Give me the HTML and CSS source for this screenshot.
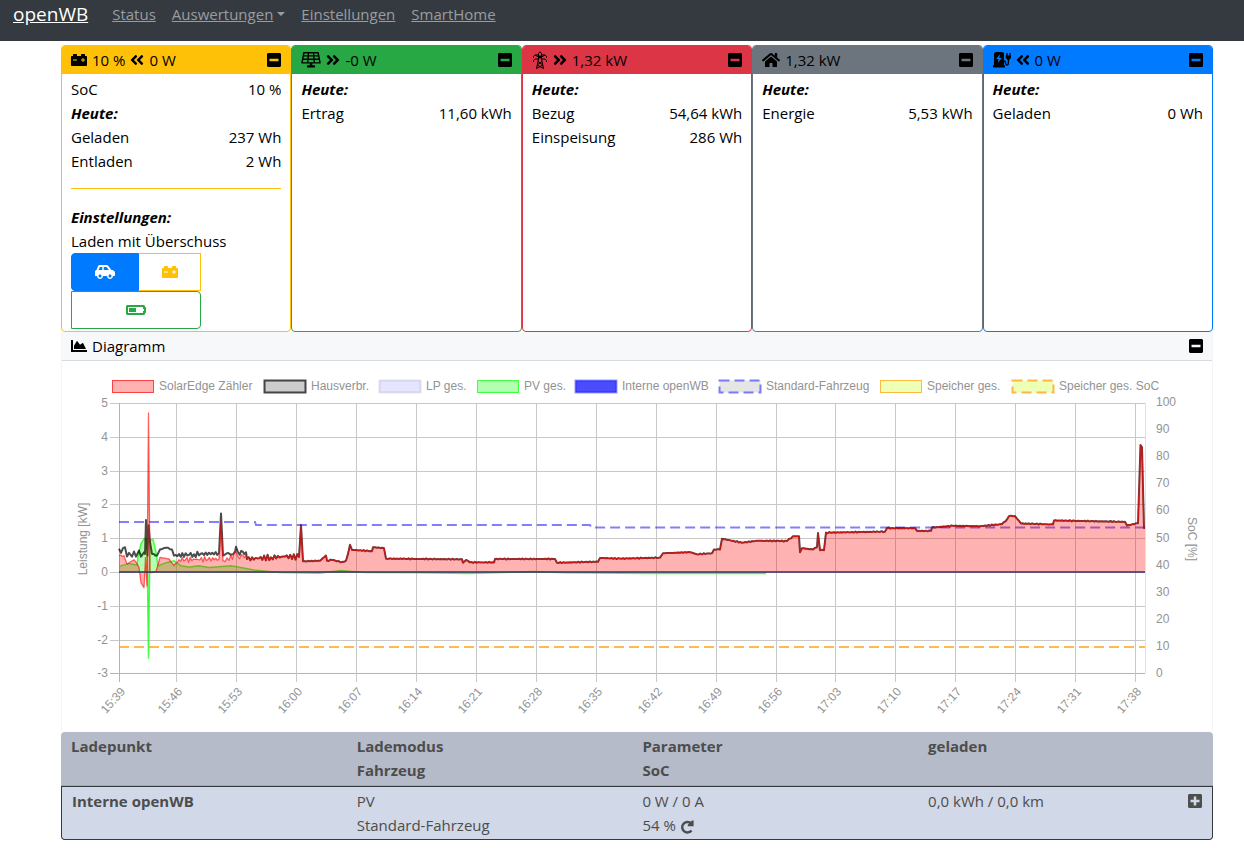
FILE: index.html
```html
<!DOCTYPE html>
<html lang="de">
<head>
<meta charset="utf-8">
<title>openWB</title>
<link rel="stylesheet" href="styles.css">
</head>
<body>
<svg class="sprite" aria-hidden="true">
  <symbol id="minus" viewBox="0 32 448 448"><path fill-rule="evenodd" d="M400 32H48C21.500 32 0 53.500 0 80v352c0 26.500 21.500 48 48 48h352c26.500 0 48-21.500 48-48V80c0-26.500-21.500-48-48-48zM92 296c-6.600 0-12-5.400-12-12v-56c0-6.600 5.400-12 12-12h264c6.600 0 12 5.400 12 12v56c0 6.600-5.400 12-12 12H92z"/></symbol>
  <symbol id="plus" viewBox="0 32 448 448"><path fill-rule="evenodd" d="M400 32H48C21.500 32 0 53.500 0 80v352c0 26.500 21.500 48 48 48h352c26.500 0 48-21.500 48-48V80c0-26.500-21.500-48-48-48zm-32 252c0 6.600-5.400 12-12 12h-92v92c0 6.600-5.400 12-12 12h-56c-6.600 0-12-5.400-12-12v-92H92c-6.600 0-12-5.400-12-12v-56c0-6.600 5.400-12 12-12h92v-92c0-6.600 5.400-12 12-12h56c6.600 0 12 5.400 12 12v92h92c6.600 0 12 5.400 12 12v56z"/></symbol>
  <symbol id="right" viewBox="0 0 448 512"><path d="M224.300 273l-136 136c-9.400 9.400-24.600 9.400-33.900 0l-22.600-22.600c-9.400-9.400-9.400-24.600 0-33.900l96.400-96.400-96.400-96.400c-9.400-9.400-9.400-24.600 0-33.900L54.300 103c9.400-9.400 24.600-9.400 33.900 0l136 136c9.500 9.400 9.500 24.600.1 34zm192-34l-136-136c-9.400-9.400-24.600-9.400-33.900 0l-22.600 22.600c-9.400 9.400-9.400 24.600 0 33.900l96.400 96.400-96.400 96.400c-9.400 9.400-9.400 24.600 0 33.900l22.600 22.600c9.400 9.400 24.600 9.400 33.900 0l136-136c9.400-9.200 9.400-24.400 0-33.800z"/></symbol>
  <symbol id="left" viewBox="0 0 448 512"><path transform="translate(448 0) scale(-1 1)" d="M224.300 273l-136 136c-9.400 9.400-24.600 9.400-33.900 0l-22.600-22.600c-9.400-9.400-9.400-24.600 0-33.900l96.400-96.400-96.400-96.400c-9.400-9.400-9.400-24.600 0-33.900L54.300 103c9.400-9.400 24.600-9.400 33.900 0l136 136c9.500 9.400 9.500 24.600.1 34zm192-34l-136-136c-9.400-9.400-24.600-9.400-33.900 0l-22.600 22.600c-9.400 9.400-9.400 24.600 0 33.900l96.400 96.400-96.400 96.400c-9.400 9.400-9.400 24.600 0 33.900l22.600 22.600c9.400 9.400 24.600 9.400 33.900 0l136-136c9.400-9.200 9.400-24.400 0-33.800z"/></symbol>
  <symbol id="home" viewBox="0 0 576 512"><path d="M280.370 148.260L96 300.110V464a16 16 0 0 0 16 16l112.060-.29a16 16 0 0 0 15.920-16V368a16 16 0 0 1 16-16h64a16 16 0 0 1 16 16v95.640a16 16 0 0 0 16 16.050L464 480a16 16 0 0 0 16-16V300L295.670 148.260a12.190 12.190 0 0 0-15.300 0zM571.600 251.470L488 182.560V44.050a12 12 0 0 0-12-12h-56a12 12 0 0 0-12 12v72.610L318.470 43a48 48 0 0 0-61 0L4.340 251.470a12 12 0 0 0-1.600 16.900l25.500 31A12 12 0 0 0 45.150 301l235.220-193.740a12.190 12.190 0 0 1 15.300 0L530.900 301a12 12 0 0 0 16.900-1.600l25.500-31a12 12 0 0 0-1.700-16.930z"/></symbol>
  <symbol id="battery" viewBox="0 0 512 512"><path fill-rule="evenodd" d="M480 128h-32V80c0-8.840-7.160-16-16-16h-96c-8.840 0-16 7.160-16 16v48H192V80c0-8.840-7.160-16-16-16H80c-8.840 0-16 7.160-16 16v48H32c-17.670 0-32 14.330-32 32v256c0 17.670 14.330 32 32 32h448c17.670 0 32-14.330 32-32V160c0-17.670-14.330-32-32-32zM192 264c0 4.420-3.580 8-8 8H72c-4.420 0-8-3.580-8-8v-16c0-4.420 3.580-8 8-8h112c4.420 0 8 3.580 8 8v16zm256 0c0 4.420-3.580 8-8 8h-40v40c0 4.420-3.580 8-8 8h-16c-4.420 0-8-3.580-8-8v-40h-40c-4.420 0-8-3.580-8-8v-16c0-4.420 3.580-8 8-8h40v-40c0-4.420 3.580-8 8-8h16c4.420 0 8 3.580 8 8v40h40c4.420 0 8 3.580 8 8v16z"/></symbol>
  <symbol id="solar" viewBox="0 0 640 512"><path fill="none" stroke="currentColor" stroke-width="44" stroke-linejoin="round" d="M92 24H548L610 346H30ZM74 122H566M52 230H588M240 24L212 346M400 24L428 346"/><path d="M280 350h80v70h70a16 16 0 0 1 16 16v60H194v-60a16 16 0 0 1 16-16h70z"/></symbol>
  <symbol id="pylon" viewBox="0 0 16 18"><path fill="none" stroke="currentColor" stroke-width="1" d="M4.500 17.500L6.500 8V2.500L8 .8L9.500 2.500V8L11.500 17.500M6.500 4H3L1.500 5.500V7M9.500 4H13L14.500 5.500V7M6.500 8H3L1.500 9.500V11M9.500 8H13L14.500 9.500V11M3 4L6.500 6H9.500L13 4M6.500 8L9.500 4M9.500 8L6.500 4M6 10.500L10.800 14M10 10.500L5.200 14M5.200 14L11.500 17.500M10.800 14L4.500 17.500"/></symbol>
  <symbol id="charger" viewBox="0 0 18 16"><path fill-rule="evenodd" d="M3 0H9Q11 0 11 2V13H12V15.500H0V13H1V2Q1 0 3 0ZM6.800 2L3.300 7H5.600L4.800 11L8.700 6H6.300Z"/><path fill="none" stroke="currentColor" stroke-width="1.400" d="M11 9Q12.500 9 12.500 11Q12.700 13 14 13Q15.400 13 15.400 11V7M14 1V4M17 1V4"/><path d="M12.800 3.500H18V5.500Q17.500 7.800 15.400 8Q13.200 7.800 12.800 5.500Z"/></symbol>
  <symbol id="car" viewBox="0 0 640 512"><path fill-rule="evenodd" d="M544 192h-16L419.220 56.020A64.025 64.025 0 0 0 369.240 32H155.330c-26.170 0-49.700 15.930-59.420 40.230L48 194.260C20.440 201.400 0 226.210 0 256v112c0 8.840 7.160 16 16 16h48c0 53.020 42.980 96 96 96s96-42.980 96-96h128c0 53.020 42.980 96 96 96s96-42.980 96-96h48c8.840 0 16-7.160 16-16v-80c0-53.020-42.980-96-96-96zM160 432c-26.470 0-48-21.530-48-48s21.530-48 48-48 48 21.530 48 48-21.530 48-48 48zm72-240H116.930l38.400-96H232v96zm48 0V96h89.240l76.800 96H280zm200 240c-26.470 0-48-21.530-48-48s21.530-48 48-48 48 21.530 48 48-21.530 48-48 48z"/></symbol>
  <symbol id="half" viewBox="0 0 640 512"><path fill-rule="evenodd" d="M544 160v64h32v64h-32v64H64V160h480m16-64H48c-26.510 0-48 21.490-48 48v224c0 26.510 21.490 48 48 48h512c26.510 0 48-21.490 48-48v-16h8c13.255 0 24-10.745 24-24V184c0-13.255-10.745-24-24-24h-8v-16c0-26.510-21.490-48-48-48zm-240 96H96v128h224V192z"/></symbol>
  <symbol id="area" viewBox="0 0 512 512"><path d="M500 384c6.600 0 12 5.400 12 12v40c0 6.600-5.400 12-12 12H12c-6.600 0-12-5.400-12-12V76c0-6.600 5.400-12 12-12h40c6.600 0 12 5.400 12 12v308h436zM372.700 159.500L288 216l-85.300-113.700c-5.100-6.800-15.500-6.300-19.900 1L96 248v104h384l-89.900-187.800c-3.200-6.500-11.400-8.700-17.400-4.700z"/></symbol>
  <symbol id="redo" viewBox="0 0 14 14"><path fill="none" stroke="currentColor" stroke-width="2.400" d="M11.500 10.400A5.200 5.200 0 1 1 11.300 3.800"/><path d="M13.600 .4V6.200H7.800V4.700L12 .4Z"/></symbol>
</svg>

<nav class="navbar">
  <a class="brand" href="#">openWB</a>
  <a class="nav-link" href="#">Status</a>
  <a class="nav-link dropdown" href="#">Auswertungen</a>
  <a class="nav-link" href="#">Einstellungen</a>
  <a class="nav-link" href="#">SmartHome</a>
</nav>

<main class="page">
  <section class="cards">
    <article class="card yellow">
      <header class="card-head"><svg class="icon"><use href="#battery"/></svg><span>10 %</span><svg class="icon narrow"><use href="#left"/></svg><span>0 W</span><button class="toggle" aria-label="Speicher einklappen"><svg class="box"><use href="#minus"/></svg></button></header>
      <div class="card-body">
        <div class="line"><span>SoC</span><span>10 %</span></div>
        <div class="title">Heute:</div>
        <div class="line"><span>Geladen</span><span>237 Wh</span></div>
        <div class="line"><span>Entladen</span><span>2 Wh</span></div>
        <hr class="rule">
        <div class="title">Einstellungen:</div>
        <div class="line">Laden mit Überschuss</div>
        <div class="modes">
          <button class="mode car" aria-label="Auto"><svg class="icon wide"><use href="#car"/></svg></button>
          <button class="mode store" aria-label="Speicher"><svg class="icon"><use href="#battery"/></svg></button>
          <button class="mode both" aria-label="Mindest-SoC"><svg class="icon wide"><use href="#half"/></svg></button>
        </div>
      </div>
    </article>
    <article class="card green">
      <header class="card-head"><svg class="icon wide"><use href="#solar"/></svg><svg class="icon narrow"><use href="#right"/></svg><span>-0 W</span><button class="toggle" aria-label="PV einklappen"><svg class="box"><use href="#minus"/></svg></button></header>
      <div class="card-body">
        <div class="title">Heute:</div>
        <div class="line"><span>Ertrag</span><span>11,60 kWh</span></div>
      </div>
    </article>
    <article class="card red">
      <header class="card-head"><svg class="icon tall"><use href="#pylon"/></svg><svg class="icon narrow"><use href="#right"/></svg><span>1,32 kW</span><button class="toggle" aria-label="Netz einklappen"><svg class="box"><use href="#minus"/></svg></button></header>
      <div class="card-body">
        <div class="title">Heute:</div>
        <div class="line"><span>Bezug</span><span>54,64 kWh</span></div>
        <div class="line"><span>Einspeisung</span><span>286 Wh</span></div>
      </div>
    </article>
    <article class="card gray">
      <header class="card-head"><svg class="icon house"><use href="#home"/></svg><span>1,32 kW</span><button class="toggle" aria-label="Haus einklappen"><svg class="box"><use href="#minus"/></svg></button></header>
      <div class="card-body">
        <div class="title">Heute:</div>
        <div class="line"><span>Energie</span><span>5,53 kWh</span></div>
      </div>
    </article>
    <article class="card blue">
      <header class="card-head"><svg class="icon house"><use href="#charger"/></svg><svg class="icon narrow"><use href="#left"/></svg><span>0 W</span><button class="toggle" aria-label="Ladepunkte einklappen"><svg class="box"><use href="#minus"/></svg></button></header>
      <div class="card-body">
        <div class="title">Heute:</div>
        <div class="line"><span>Geladen</span><span>0 Wh</span></div>
      </div>
    </article>
  </section>

  <section class="diagram">
    <header class="diagram-head"><svg class="icon"><use href="#area"/></svg><span>Diagramm</span><button class="toggle" aria-label="Diagramm einklappen"><svg class="box"><use href="#minus"/></svg></button></header>
    <svg class="chart" id="chart" viewBox="0 0 1150 371" role="img" aria-label="Leistung und SoC"></svg>
  </section>

  <table class="points">
    <colgroup><col class="col"><col class="col"><col class="col"><col></colgroup>
    <thead>
      <tr><th>Ladepunkt</th><th>Lademodus<br>Fahrzeug</th><th>Parameter<br>SoC</th><th>geladen</th></tr>
    </thead>
    <tbody>
      <tr>
        <th scope="row">Interne openWB</th>
        <td>PV<br>Standard-Fahrzeug</td>
        <td>0 W / 0 A<br>54 % <button class="refresh" aria-label="SoC aktualisieren"><svg class="redo"><use href="#redo"/></svg></button></td>
        <td><div class="last"><span>0,0 kWh / 0,0 km</span><button class="toggle" aria-label="Ladepunkt ausklappen"><svg class="box"><use href="#plus"/></svg></button></div></td>
      </tr>
    </tbody>
  </table>
</main>
<script src="chart.js"></script>
</body>
</html>
```

FILE: styles.css
```css
* { box-sizing: border-box; }
body {
  margin: 0;
  background: #fff;
  color: #000;
  font-family: "Open Sans", "Noto Sans", sans-serif;
  font-size: 15px;
  line-height: 24px;
}
.sprite { display: none; }
button {
  margin: 0;
  padding: 0;
  border: 0;
  background: none;
  color: inherit;
  font: inherit;
  cursor: pointer;
}
svg { fill: currentColor; }

.navbar {
  display: flex;
  align-items: flex-start;
  gap: 16px;
  padding: 2px 13px 15px;
  background: #343a40;
}
.brand { margin-right: 8px; color: #fff; font-size: 19px; }
.nav-link { color: #9a9da0; }
.dropdown::after {
  content: "";
  display: inline-block;
  margin-left: 4px;
  vertical-align: 4px;
  border: 4px solid transparent;
  border-top-color: currentColor;
  border-bottom: 0;
}

.page { padding: 4px 31px 8px 61px; }
.cards { display: grid; grid-template-columns: repeat(5, 1fr); }
.card {
  min-width: 0;
  border: 1px solid var(--tone);
  border-radius: 4px;
  overflow: hidden;
}
.yellow { --tone: #ffc107; }
.green { --tone: #28a745; }
.red { --tone: #dc3545; }
.gray { --tone: #6c757d; }
.blue { --tone: #007bff; }
.card-head {
  display: flex;
  align-items: center;
  gap: 5px;
  padding: 2px 9px;
  background: var(--tone);
}
.icon { display: block; flex: none; width: 16px; height: 16px; }
.narrow { width: 14px; }
.wide { width: 20px; }
.house { width: 18px; }
.tall { height: 18px; }
.box { display: block; width: 14px; height: 14px; }
.toggle { margin-left: auto; }
.card-body { padding: 3px 9px 2px; }
.line { display: flex; justify-content: space-between; }
.title { font-weight: 700; font-style: italic; }
.rule { height: 1px; margin: 15px 0 16px; border: 0; background: var(--tone); }
.modes { display: grid; grid-template-columns: 68px 62px; }
.mode {
  display: flex;
  align-items: center;
  justify-content: center;
  height: 38px;
  border: 1px solid currentColor;
}
.car { border-color: #007bff; border-radius: 4px 0 0 4px; background: #007bff; color: #fff; }
.store { border-left: 0; color: #ffc107; }
.both { grid-column: 1 / -1; border-color: #28a745; border-radius: 0 4px 4px 0; color: #28a745; }

.diagram { border: 1px solid #f4f4f4; border-top: 0; border-bottom: 0; }
.diagram-head {
  display: flex;
  align-items: center;
  gap: 5px;
  padding: 2px 9px;
  border-bottom: 1px solid #d9dbdf;
  background: #f7f8fa;
}
.chart { display: block; width: 100%; height: auto; }
.chart text { fill: #939393; font: 12px "Liberation Sans", Arial, sans-serif; }
.grid { stroke: #c8c8c8; fill: none; }
.edge { stroke: #b4b4b4; fill: none; }
.pale { stroke: #e0e0e0; fill: none; }

.points {
  width: 100%;
  table-layout: fixed;
  border-spacing: 0;
  color: #4d4d4d;
}
.col { width: 24.8%; }
.points th, .points td { padding: 2px 10px; text-align: left; vertical-align: top; }
.points thead th { padding-bottom: 3px; background: #b5bbc9; border-bottom: 1px solid #9fa6b7; }
.points thead th:first-child { border-radius: 4px 0 0 0; }
.points thead th:last-child { border-radius: 0 4px 0 0; }
.points tbody th, .points tbody td {
  border: 0 solid #343a40;
  border-width: 1px 0;
  background: #d1d8e7;
}
.points tbody th { border-left-width: 1px; border-radius: 0 0 0 4px; }
.points tbody td:last-child { border-right-width: 1px; border-radius: 0 0 4px 0; }
.last { display: flex; align-items: center; }
.redo { display: block; width: 14px; height: 14px; }
.refresh { vertical-align: middle; }
```

FILE: chart.js
```js
const svg = document.getElementById("chart");
const LEFT = 57, RIGHT = 1083, TOP = 42, ZERO = 211, BOTTOM = 312, KW = 33.8;

function add(tag, attrs, text) {
  const el = document.createElementNS("http://www.w3.org/2000/svg", tag);
  for (const key in attrs) el.setAttribute(key, attrs[key]);
  if (text !== undefined) el.textContent = text;
  svg.appendChild(el);
}

/* Subdivides longer stretches and adds the small ripple of the meter readings. */
function ripple(points, strength) {
  const out = [points[0]];
  for (let i = 1; i < points.length; i++) {
    const [x0, y0] = points[i - 1];
    const [x1, y1] = points[i];
    const n = Math.floor((x1 - x0) / 1.6);
    for (let k = 1; k < n; k++) {
      const x = x0 + (x1 - x0) * k / n;
      const amp = strength(x);
      out.push([x, y0 + (y1 - y0) * k / n + amp * (Math.sin(x * 1.7) * 0.8 + Math.sin(x * 5.3) * 0.5)]);
    }
    out.push(points[i]);
  }
  return out;
}
const toPath = pts => "M" + pts.map(([x, y]) => (LEFT + x).toFixed(1) + " " + (ZERO + 0.5 - y * KW).toFixed(1)).join("L");
const toArea = pts => toPath([[pts[0][0], 0], ...pts, [pts[pts.length - 1][0], 0]]) + "Z";

const shared = [[128,.4],[140,.42],[152,.45],[166,.47],[180,.46],[182,1.4],[184,.33],[201,.35],[207,.5],[208,.35],[213,.37],[223,.31],[227,.35],[229,.55],[231,.82],[233,.67],[253,.63],[254,.75],[265,.72],[267,.41],[343,.39],[344,.29],[347,.37],[351,.3],[375,.3],[376,.4],[436,.4],[438,.29],[479,.32],[481,.43],[501,.41],[541,.44],[544,.57],[571,.6],[578,.54],[593,.57],[595,.68],[601,.68],[603,1],[623,.88],[638,.94],[668,.93],[674,1.07],[680,1.07],[681,.6],[683,.72],[694,.68],[698,.75],[699,1.17],[701,.66],[705,.66],[707,1.18],[766,1.21],[768,1.31],[796,1.31],[798,1.23],[812,1.23],[813,1.33],[834,1.38],[861,1.37],[883,1.43],[888,1.57],[890,1.67],[896,1.67],[902,1.45],[934,1.42],[935,1.54],[1006,1.5],[1008,1.39],[1019,1.46],[1021.5,3.77],[1023,3.7],[1025,1.32],[1026,1.32]];
const houseStart = [[0,.7],[2,.58],[4,.72],[6,.75],[8,.47],[10,.58],[13,.47],[15,.62],[17,.47],[20,.65],[22,.47],[25,.6],[26,.55],[27,1.55],[28.5,.5],[29.5,1.4],[31,.9],[33,.55],[38,.5],[41,.68],[47,.73],[53,.68],[55,.5],[75,.54],[100,.57],[102,1.75],[104,.5],[109,.58],[112,.52],[116,.6],[117,.76],[119,.6],[127,.6]];
const gridStart = [[0,.5],[5,.5],[8,.25],[15,.38],[18,.26],[20,.15],[22,-.3],[25,-.45],[26.5,.45],[28,-.4],[29.5,4.72],[31,0],[37,.03],[41,.45],[50,.4],[55,.2],[60,.38],[100,.4],[102,1.5],[104,.35],[110,.36],[117,.6],[119,.48],[127,.5]];
const amp = x => x < 30 ? .03 : x < 55 ? .015 : x < 180 ? .07 : .014;
const house = ripple([...houseStart, ...shared], amp);
const meter = ripple([...gridStart, ...shared], amp);
const pv = [[0,.18],[10,.27],[18,.22],[19,.5],[22,.85],[25,1],[28,1],[29.5,-2.55],[31,.95],[34,.98],[37,.6],[39,.2],[48,.3],[55,.35],[62,.2],[70,.16],[80,.2],[90,.15],[112,.2],[122,.15],[135,.07],[160,0],[200,-.02],[222,.06],[245,0],[300,-.01],[350,-.03],[385,0],[415,.03],[445,-.01],[530,-.03],[647,-.03]];

/* grid */
const ticks = [57];
for (let i = 0; i < 17; i++) ticks.push(Math.round(114 + i * 59.95));
for (let v = 5; v >= -3; v--) {
  const y = Math.round(TOP + (5 - v) * KW) + .5;
  add("path", { class: v === -3 ? "edge" : "grid", d: `M${LEFT - 9} ${y}H${RIGHT}` });
  add("text", { x: 46, y: y + 3, "text-anchor": "end" }, v);
}
ticks.forEach((x, i) => add("path", { class: i ? "grid" : "edge", d: `M${x + .5} ${TOP}V${BOTTOM + 9}` }));
add("path", { class: "pale", d: `M${RIGHT + .5} ${TOP}V${BOTTOM}` });
for (let v = 0; v <= 100; v += 10) add("text", { x: 1094, y: 316 - v * 2.71 }, v);
["15:39","15:46","15:53","16:00","16:07","16:14","16:21","16:28","16:35","16:42","16:49","16:56","17:03","17:10","17:17","17:24","17:31","17:38"].forEach((t, i) =>
  add("text", { transform: `translate(${ticks[i] + 7} 331) rotate(-48)`, "text-anchor": "end" }, t));
add("text", { transform: "translate(25 178) rotate(-90)", "text-anchor": "middle" }, "Leistung [kW]");
add("text", { transform: "translate(1126 178) rotate(90)", "text-anchor": "middle" }, "SoC [%]");

/* series */
const orange = "rgba(255,155,0,.7)", violet = "rgba(0,0,255,.5)";
add("path", { d: `M${LEFT} 286H${RIGHT}`, fill: "none", stroke: orange, "stroke-width": 2, "stroke-dasharray": "10 5" });
add("path", { d: `M${LEFT} 161H193L194 164H528L529 166.500H${RIGHT}`, fill: "none", stroke: violet, "stroke-width": 2, "stroke-dasharray": "10 5" });
add("path", { d: toArea(pv), fill: "rgba(0,255,0,.3)" });
add("path", { d: toPath(pv), fill: "none", stroke: "rgba(0,255,0,.7)", "stroke-width": 1.5 });
add("path", { d: toPath(house), fill: "none", stroke: "rgba(0,0,0,.7)", "stroke-width": 2, "stroke-linejoin": "round" });
add("path", { d: toArea(meter), fill: "rgba(255,0,0,.3)" });
add("path", { d: toPath(meter), fill: "none", stroke: "rgba(255,0,0,.6)", "stroke-width": 1.3, "stroke-linejoin": "round" });
add("path", { d: `M${LEFT} ${ZERO}H${RIGHT}`, fill: "none", stroke: "rgba(50,50,110,.75)", "stroke-width": 2 });

/* legend */
[[50,"SolarEdge Zähler","rgba(255,0,0,.3)","rgba(255,0,0,.7)",1],
 [202,"Hausverbr.","rgba(0,0,0,.2)","rgba(0,0,0,.7)",2],
 [317,"LP ges.","rgba(0,0,255,.1)","rgba(0,0,80,.1)",2],
 [415,"PV ges.","rgba(0,255,0,.3)","rgba(0,255,0,.7)",1],
 [513,"Interne openWB","rgba(0,0,255,.7)","rgba(0,0,255,.4)",2],
 [657,"Standard-Fahrzeug","rgba(0,0,0,.1)",violet,2,"10 5"],
 [818,"Speicher ges.","rgba(200,255,13,.3)",orange,1],
 [950,"Speicher ges. SoC","rgba(200,255,13,.3)",orange,2,"10 5"]
].forEach(([x, name, fill, stroke, width, dash]) => {
  add("rect", { x: x + .5, y: 19.5, width: 41, height: 12, fill, stroke, "stroke-width": width, "stroke-dasharray": dash || "none" });
  add("text", { x: x + 47, y: 29 }, name);
});
```
